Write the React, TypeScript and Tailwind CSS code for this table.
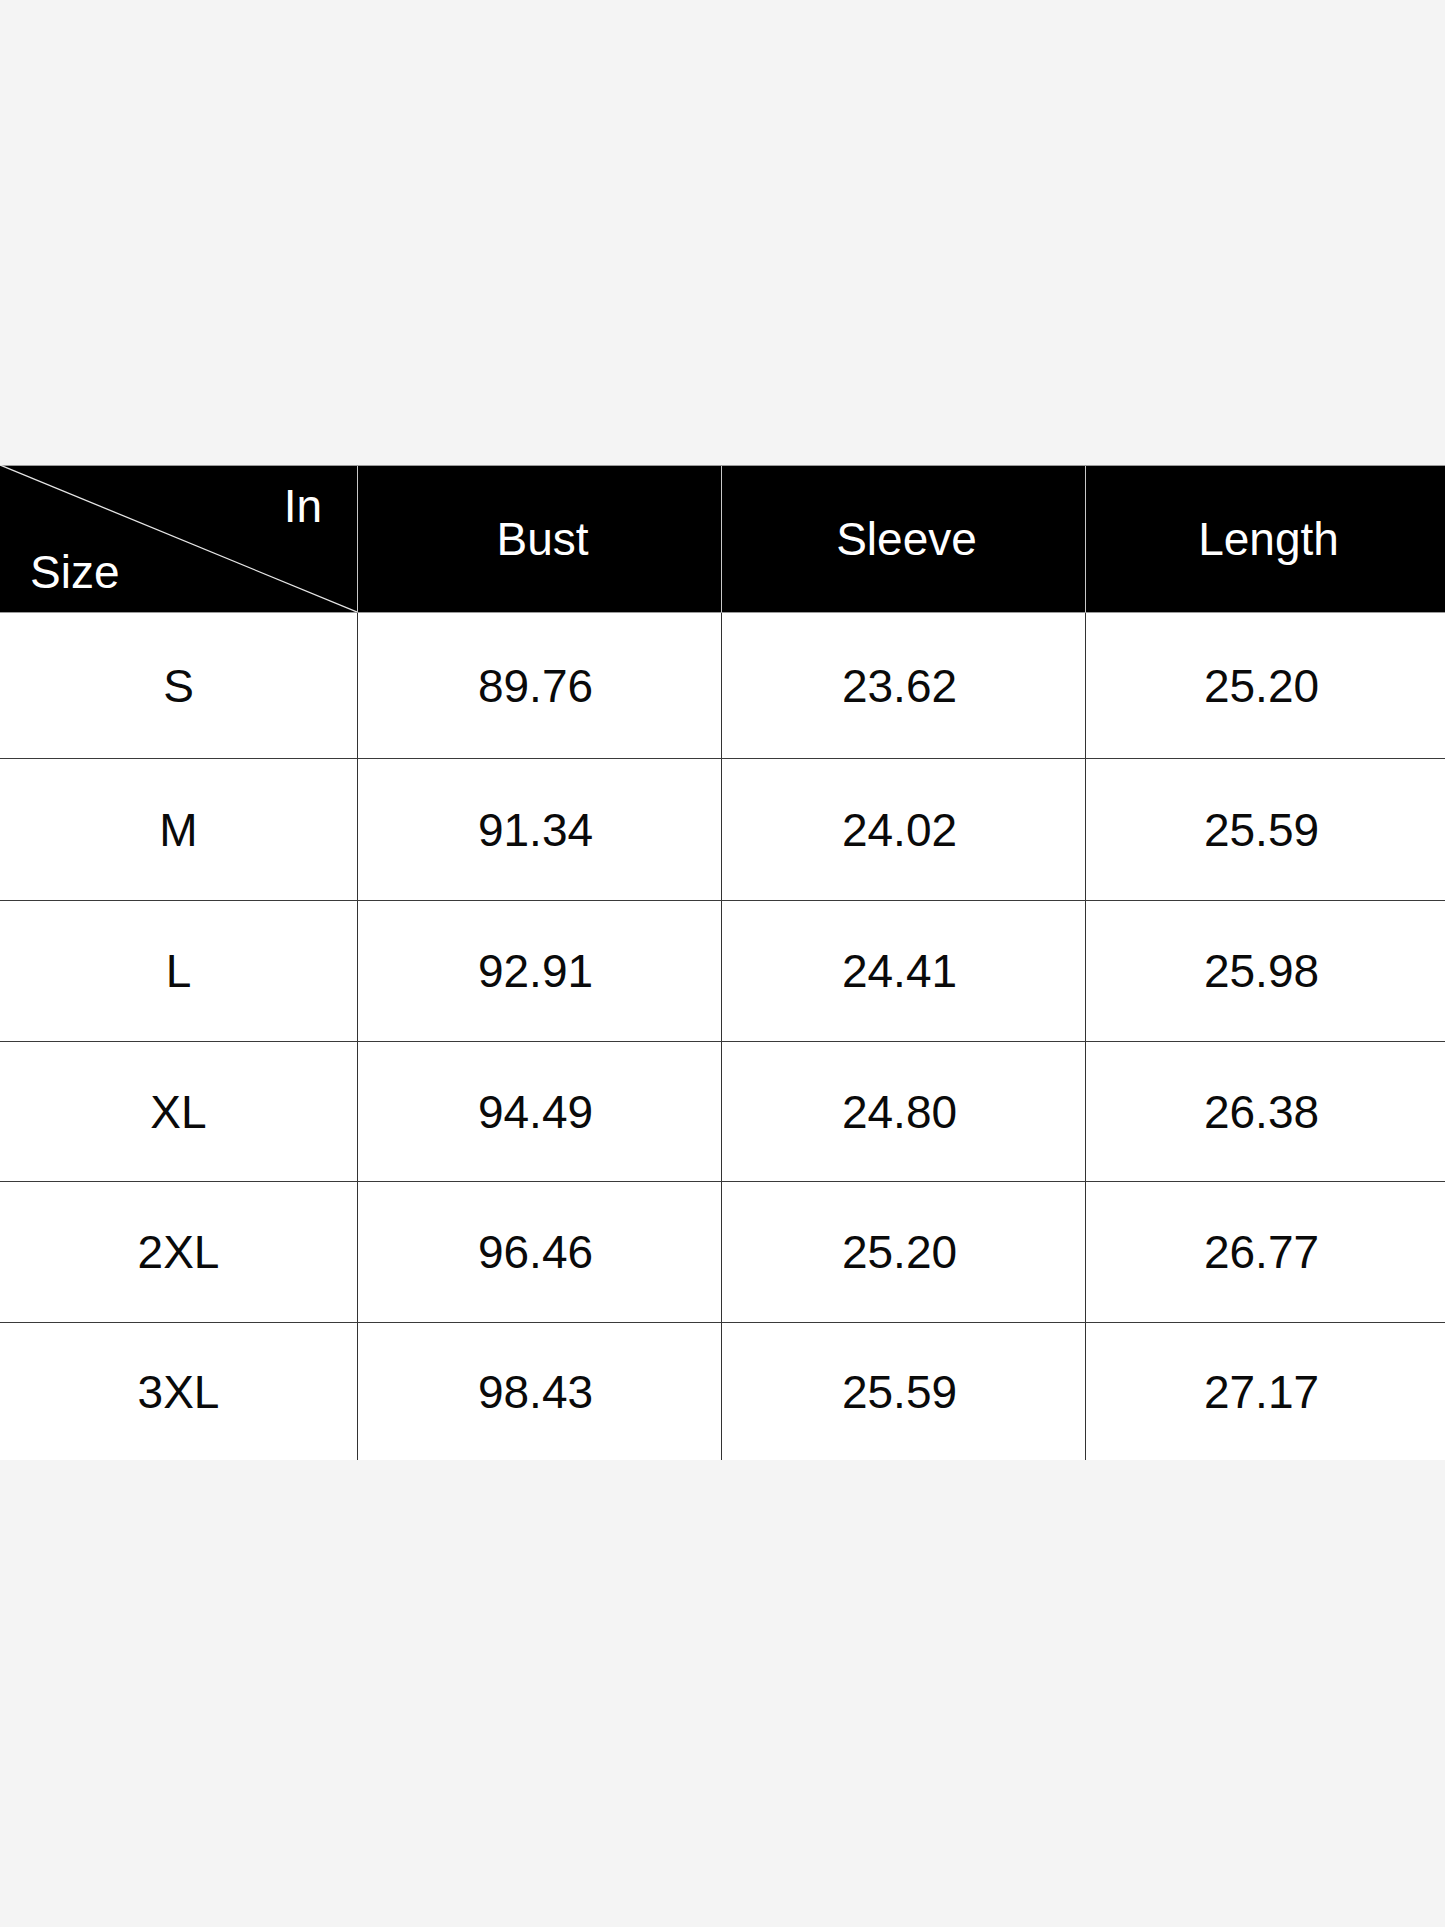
import React from "react";

const rows = [
  { size: "S", bust: "89.76", sleeve: "23.62", length: "25.20", h: "h-[146px] border-b" },
  { size: "M", bust: "91.34", sleeve: "24.02", length: "25.59", h: "h-[142px] border-b" },
  { size: "L", bust: "92.91", sleeve: "24.41", length: "25.98", h: "h-[141px] border-b" },
  { size: "XL", bust: "94.49", sleeve: "24.80", length: "26.38", h: "h-[140px] border-b" },
  { size: "2XL", bust: "96.46", sleeve: "25.20", length: "26.77", h: "h-[141px] border-b" },
  { size: "3XL", bust: "98.43", sleeve: "25.59", length: "27.17", h: "h-[137px]" },
];

const cols = "grid grid-cols-[357px_364px_364px_1fr]";

export default function App() {
  return (
    <div className="min-h-[1927px] bg-[#f4f4f4] pt-[465px] font-['Liberation_Sans',Arial,sans-serif]">
      <div className="w-full">
        {/* Header */}
        <div className={`${cols} h-[148px] border-y border-[#9a9a9a] bg-black text-[46px] leading-none text-white`}>
          <div className="relative flex flex-col pl-[30px] pt-[17px]">
            <svg className="absolute left-0 top-[-1px]" width="357" height="147" viewBox="0 0 357 147">
              <line x1="0" y1="0" x2="357" y2="147" stroke="#e5e5e5" strokeWidth="1.3" />
            </svg>
            <span className="relative self-end pr-[35px]">In</span>
            <span className="relative mt-[20px] self-start">Size</span>
          </div>
          {["Bust", "Sleeve", "Length"].map((h) => (
            <div key={h} className="flex items-center justify-center border-l border-[#c8c8c8] pl-[6px]">
              {h}
            </div>
          ))}
        </div>

        {/* Body */}
        {rows.map((r) => (
          <div key={r.size} className={`${cols} ${r.h} border-[#3a3a3a] bg-white text-[46px] leading-none text-[#0a0a0a]`}>
            <div className="flex items-center justify-center">{r.size}</div>
            {[r.bust, r.sleeve, r.length].map((v, i) => (
              <div key={i} className="flex items-center justify-center border-l border-[#333] pr-[8px]">
                {v}
              </div>
            ))}
          </div>
        ))}
      </div>
    </div>
  );
}
